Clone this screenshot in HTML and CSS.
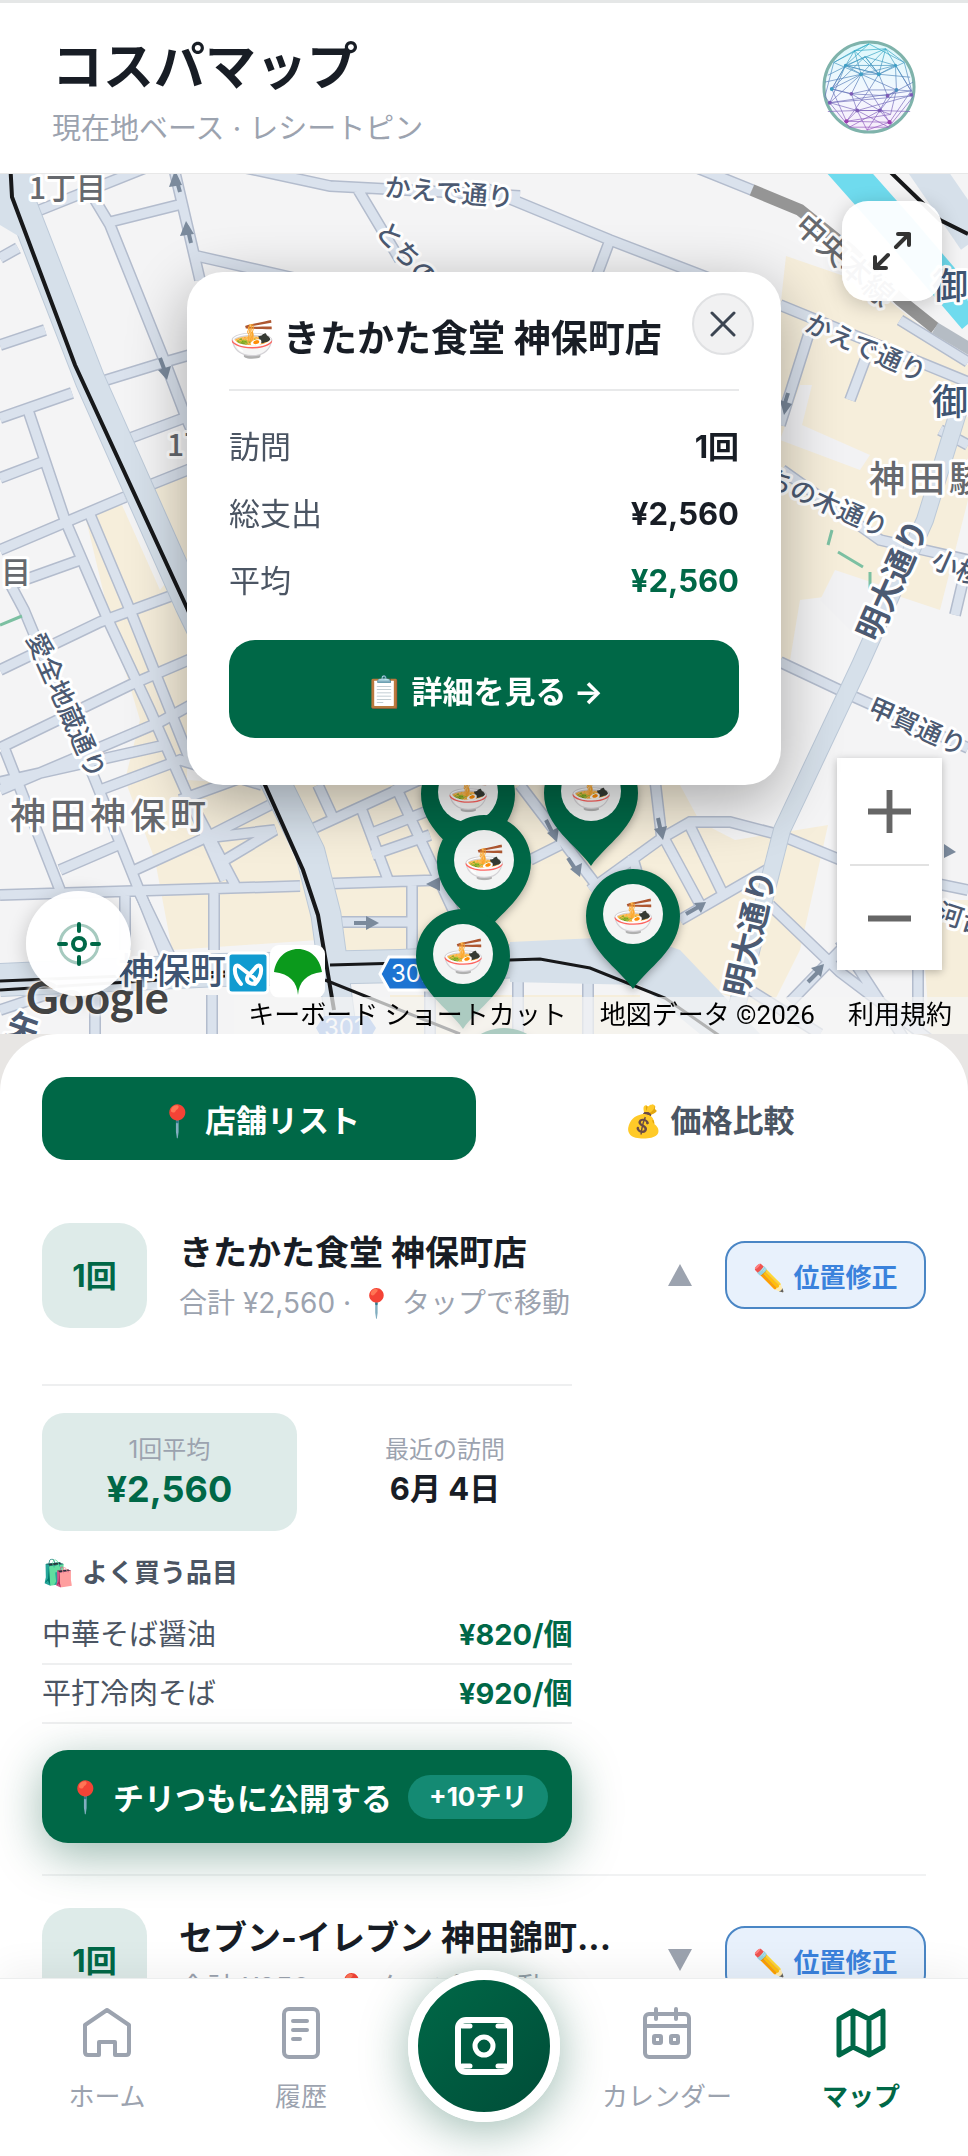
FILE: index.html
```
<!DOCTYPE html>
<html lang="ja">
<head>
  <meta charset="UTF-8">
  <meta name="viewport" content="width=device-width, initial-scale=1.0">
  <title>コスパマップ</title>
  <link rel="stylesheet" href="styles.css">
</head>
<body>
  <div class="app">
    <header class="header">
      <div>
        <h1 class="header-title">コスパマップ</h1>
        <p class="header-sub">現在地ベース · レシートピン</p>
      </div>
      <svg class="logo" viewBox="0 0 100 100" aria-hidden="true">
        <defs>
          <linearGradient id="mesh" x1="0" y1="0" x2="0" y2="100" gradientUnits="userSpaceOnUse">
            <stop offset="0" stop-color="#22b8c8"/>
            <stop offset="0.5" stop-color="#5f79b8"/>
            <stop offset="1" stop-color="#a04fc0"/>
          </linearGradient>
          <linearGradient id="orb" x1="0" y1="0" x2="0" y2="1">
            <stop offset="0" stop-color="#dcf8fb"/>
            <stop offset="0.6" stop-color="#f5f8ff"/>
            <stop offset="1" stop-color="#f6ebfa"/>
          </linearGradient>
        </defs>
        <circle cx="50" cy="50" r="46" fill="url(#orb)" stroke="#7fb3ab" stroke-width="3"/>
        <g fill="none" stroke="url(#mesh)" stroke-width="0.7">
          <path d="M50 6L35 13L67 11L26 28L77 28L42 37L60 37L46 19L12 52L32 57L69 59L78 53L93 54L10 66L92 59L38 74L61 74L72 78L27 85L71 86L48 94M50 6L26 28L12 52L27 85L38 74L32 57L42 37L26 28L60 37L69 59L61 74L32 57L12 52L42 37L78 53L77 28L60 37L46 19L77 28L93 54L71 86L61 74L38 74L48 94L61 74L78 53L72 78"/>
          <path d="M14 25L50 6L86 25L95 60L70 91L30 91L5 60ZM14 25L42 37M38 74L10 66L42 37L67 11M60 37L26 28L10 66M69 59L95 45M5 45L42 37L50 53L60 37L86 25M32 57L50 53L78 53M27 85L50 53L71 86M30 91L61 74L92 75M70 91L38 74L8 75M35 13L12 52M67 11L93 54M35 13L60 37L92 40M46 19L8 38M14 25L35 13L42 37M86 25L67 11L60 37"/>
        </g>
        <g fill="#7c5bb5">
          <circle cx="26" cy="28" r="1.6" fill="#3f9fc4"/><circle cx="77" cy="28" r="1.6" fill="#3f9fc4"/>
          <circle cx="42" cy="37" r="2" fill="#3f9fc4"/><circle cx="60" cy="37" r="2" fill="#3f9fc4"/>
          <circle cx="12" cy="52" r="2" fill="#3f9fc4"/><circle cx="32" cy="57" r="2"/><circle cx="69" cy="59" r="2"/>
          <circle cx="78" cy="53" r="2" fill="#4c8fc0"/><circle cx="93" cy="58" r="2"/><circle cx="10" cy="66" r="2"/>
          <circle cx="38" cy="74" r="2"/><circle cx="61" cy="74" r="2"/><circle cx="27" cy="85" r="2.2" fill="#9a3fb0"/><circle cx="71" cy="86" r="2.2" fill="#9a3fb0"/>
        </g>
      </svg>
    </header>

    <section class="map" aria-label="地図">
      <svg class="map-canvas" viewBox="0 174 968 860" preserveAspectRatio="xMidYMid slice">
        <defs>
          <g id="minor">
            <path d="M35 212L150 166M95 200L110 225L165 362L187 420L205 460M110 222L178 205M172 160L200 280M197 256L320 284M232 165L330 186L520 196M357 188L400 260"/>
            <path d="M100 382L165 362L200 352M0 258L18 248M0 345L45 330M0 418L72 393M28 410L65 520L108 620L150 710L225 880M0 478L42 462M0 550L125 497M125 440L200 412M145 487L200 465M88 510L130 610L190 760M10 585L80 560M8 580L24 610L95 780L165 955"/>
            <path d="M0 670L100 622L187 590M0 748L130 685L200 655M0 790L160 722L200 700M0 782L165 745M5 750L60 890M100 790L180 760L262 785M60 870L118 845M0 895L300 886M135 870L205 838L275 830L225 860M190 800L235 885M180 800L290 760M125 895L125 950M138 890L172 960M214 890L214 950M205 838L270 805"/>
            <path d="M310 830L430 775M360 805L390 885M318 785L335 822M372 833L425 812M372 855L430 835M318 884L440 880M412 884L412 950M335 922L412 922M395 785L460 925M520 785L600 890L610 900M655 780L662 840M530 860L560 845M590 890L662 838L690 822L730 822L780 835L860 868L968 890M664 838L702 908M690 826L722 892M632 855L645 900M680 920L770 868"/>
            <path d="M770 905L840 972L930 1040M790 1002L860 930M840 940L905 1040M918 960L918 1034M780 662L850 695L968 748M95 995L95 1034M212 995L212 1034M518 980L518 1034M588 980L588 1034M0 1010L60 990M430 990L430 1034M750 990L820 1034"/>
            <path d="M480 186L513 200L610 240L740 290M610 240L595 280M690 165L752 190M780 305L968 382M810 330L780 425M865 360L850 400M782 470L880 540L968 560M900 320L968 362M940 430L968 445M955 615L968 560"/>
          </g>
        </defs>
        <rect x="0" y="174" width="968" height="860" fill="#f4f4f5"/>
        <g fill="#f6eedb">
          <path d="M85 515L122 505L160 590L168 580L147 490L187 475V780L262 785L300 870L318 940L172 950L155 860L125 780L140 720L110 620Z"/>
          <path d="M275 785L480 760L680 785L700 822L735 840L828 825L800 950L770 1010L620 960L330 950Z"/>
          <path d="M786 256L870 285L968 365V500L940 610L880 590L800 600L790 660H780V310Z"/>
          <path d="M920 900L968 900V1034H930Z"/>
          <path d="M390 995L640 995L640 1034H390Z"/>
        </g>
        <g fill="#f2f2f4">
          <path d="M800 385L812 385L802 425L870 455L860 470L780 440Z"/>
          <path d="M835 570L880 585L860 640L820 600Z"/>
        </g>
        <use href="#minor" fill="none" stroke="#b3bccd" stroke-width="12"/>
        <use href="#minor" fill="none" stroke="#dae2ed" stroke-width="9"/>

        <!-- wide roads -->
        <g fill="none" stroke="#bcc9d8" stroke-linejoin="round">
          <path stroke-width="31" d="M22 160L22 205L90 380L190 605L277 785L310 852L326 915L342 1034"/>
          <path stroke-width="18" d="M965 390L925 520L860 665L782 830L730 1034"/>
          <path stroke-width="34" d="M0 980L220 970L400 966L590 958"/>
        </g>
        <g fill="none" stroke="#d6e0ea" stroke-linejoin="round">
          <path stroke-width="29" d="M22 160L22 205L90 380L190 605L277 785L310 852L326 915L342 1034"/>
          <path stroke-width="16" d="M965 390L925 520L860 665L782 830L730 1034"/>
          <path stroke-width="32" d="M0 980L220 970L400 966L590 958"/>
          <path stroke-width="34" d="M920 160L975 240"/>
        </g>
        <path d="M510 942L640 936L680 950L760 1034H700L640 985L510 982Z" fill="#d6e0ea"/>
        <path d="M-2 174H20L25 240L0 225Z" fill="#d6e0ea"/>

        <!-- river and railways -->
        <path d="M838 160L900 230L975 318" fill="none" stroke="#6fdbee" stroke-width="34"/>
        <path d="M752 190L800 210L850 250L900 300L935 328" fill="none" stroke="#959595" stroke-width="12"/>
        <path d="M935 328L975 352" fill="none" stroke="#b5bcc4" stroke-width="12"/>
        <g fill="none" stroke="#17181a" stroke-width="4">
          <path d="M10 160L12 197L75 365L187 608L265 785L303 870L318 915L334 1010"/>
          <path d="M878 160L940 220L968 234"/>
          <path d="M0 981L225 972M0 990L225 976M330 965L510 960L540 959L590 968L665 998L740 1050" stroke-width="3"/>
          <path d="M325 980L460 1034" stroke-width="3"/>
        </g>
        <g fill="none" stroke="#7cc0a2" stroke-width="3">
          <path d="M832 530L828 545M838 552L863 567M870 572V590M0 625L22 616"/>
        </g>

        <!-- one-way arrows -->
        <g fill="none" stroke="#7b8a9c" stroke-width="4">
          <path d="M180 192L176 178M191 243L187 226M160 358L166 374M354 923H372M546 820L554 836M568 858L577 872M658 818L661 832M686 914L700 906M808 982L820 970M788 393L784 406"/>
        </g>
        <g fill="#7b8a9c">
          <path d="M175 170L182 185L169 187Z"/><path d="M186 221L194 234L180 236Z"/><path d="M167 380L158 370L171 366Z"/>
          <path d="M379 923L366 930V916Z"/><path d="M557 842L547 833L559 827Z"/><path d="M580 877L570 869L582 863Z"/>
          <path d="M663 840L654 829L667 826Z"/><path d="M706 902L701 913L694 903Z"/><path d="M824 964L821 977L811 968Z"/>
          <path d="M784 415L780 400L792 404Z"/><path d="M956 852L944 858L944 844Z"/><path d="M426 884L440 877V891Z"/>
        </g>

        <g class="map-label">
          <text class="area" x="29" y="199">1丁目</text>
          <text class="area" x="167" y="456">1丁目</text>
          <text class="area" x="1" y="583">目</text>
          <text class="area large" x="10" y="829">神田神保町</text>
          <text class="area large" x="869" y="492">神田駿河台</text>
          <text class="road" transform="translate(384 196) rotate(5)">かえで通り</text>
          <text class="road" transform="translate(374 232) rotate(48)">とちの木</text>
          <text class="road" transform="translate(803 330) rotate(24)">かえで通り</text>
          <text class="road" transform="translate(764 485) rotate(24)">ちの木通り</text>
          <text class="road" transform="translate(930 566) rotate(24)">小桜通り</text>
          <text class="road" transform="translate(866 714) rotate(24)">甲賀通り</text>
          <text class="road" transform="translate(935 920) rotate(18)">河台</text>
          <text class="road" transform="translate(26 638) rotate(66)">愛全地蔵通り</text>
          <text class="road bold" transform="translate(877 643) rotate(-66)">明大通り</text>
          <text class="road bold" transform="translate(747 998) rotate(-77)">明大通り</text>
          <text class="road bold" transform="translate(4 1034) rotate(20)">矢</text>
          <text class="area" transform="translate(793 228) rotate(42)">中央本線</text>
          <text class="station" x="932" y="415">御茶</text>
          <text class="station" x="932" y="299">御茶</text>
          <text class="station" x="118" y="984">神保町</text>
        </g>

        <!-- station marks -->
        <rect x="228" y="953" width="40" height="40" rx="4" fill="#109bd0" stroke="#fff" stroke-width="3"/>
        <path d="M241 984C232 974 234 961 240 967L254 978C258 982 254 985 250 983C246 981 246 977 250 974L256 967C262 961 264 974 255 984" fill="none" stroke="#fff" stroke-width="4" stroke-linecap="round"/>
        <rect x="270" y="945" width="55" height="53" rx="9" fill="#fff"/>
        <path d="M298 995C297 982 290 974 274 972C276 958 286 949 298 949C310 949 320 958 322 972C306 974 299 982 298 995Z" fill="#0b9a1c"/>
        <path d="M380 974L389 957H440V990H389Z" fill="#1d74d2" stroke="#fff" stroke-width="3"/>
        <text class="route" x="391" y="982">302</text>
        <path d="M316 1028L324 1016H368L376 1028L368 1042H324Z" fill="#7fa9e6"/>
        <text class="route" x="324" y="1036">301</text>

        <g class="pins">
          <g id="pin" class="pin" transform="translate(468 792)">
            <path d="M0 75C-14 54 -47 36 -47 2A47 47 0 0 1 47 2C47 36 14 54 0 75Z"/>
            <circle r="30"/>
            <text y="14">🍜</text>
          </g>
          <use href="#pin" x="123" y="-1"/>
          <use href="#pin" x="36" y="281"/>
          <use href="#pin" x="16" y="68"/>
          <use href="#pin" x="-5" y="162"/>
          <use href="#pin" x="165" y="122"/>
        </g>
      </svg>

      <span class="google">Google</span>
      <div class="attribution">
        <button class="attribution-link" type="button">キーボード ショートカット</button>
        <span>地図データ ©2026</span>
        <a class="attribution-link" href="#terms">利用規約</a>
      </div>

      <button class="expand" type="button" aria-label="全画面">
        <svg viewBox="0 0 40 40" fill="none" stroke="#333" stroke-width="4" stroke-linecap="round" stroke-linejoin="round"><path d="M24 16L37 3M26 3H37V14M16 24L3 37M3 26V37H14"/></svg>
      </button>
      <button class="locate" type="button" aria-label="現在地">
        <svg viewBox="0 0 44 44" fill="none" stroke="#006847" stroke-linecap="round"><circle cx="22" cy="22" r="19" stroke-width="3" opacity="0.35"/><circle cx="22" cy="22" r="6" stroke-width="4"/><path stroke-width="4" d="M22 2V9M22 35V42M2 22H9M35 22H42"/></svg>
      </button>
      <div class="zoom">
        <button class="zoom-btn" type="button" aria-label="拡大"><svg viewBox="0 0 44 44" stroke="#666" stroke-width="6"><path d="M22 0V44M0 22H44"/></svg></button>
        <button class="zoom-btn" type="button" aria-label="縮小"><svg viewBox="0 0 44 44" stroke="#666" stroke-width="6"><path d="M0 22H44"/></svg></button>
      </div>

      <div class="popup" role="dialog" aria-labelledby="popup-title">
        <button class="popup-close" type="button" aria-label="閉じる">
          <svg viewBox="0 0 26 26" stroke="#3c4552" stroke-width="3" stroke-linecap="round"><path d="M2 2L24 24M24 2L2 24"/></svg>
        </button>
        <h2 class="popup-title" id="popup-title"><span class="emoji">🍜</span>きたかた食堂 神保町店</h2>
        <dl class="popup-stats">
          <div class="stat"><dt>訪問</dt><dd>1回</dd></div>
          <div class="stat"><dt>総支出</dt><dd>¥2,560</dd></div>
          <div class="stat"><dt>平均</dt><dd class="green">¥2,560</dd></div>
        </dl>
        <button class="popup-btn" type="button"><span class="emoji">📋</span>詳細を見る →</button>
      </div>
    </section>

    <main class="sheet">
      <div class="tabs" role="tablist">
        <button class="tab active" type="button" role="tab" aria-selected="true"><span class="emoji">📍</span>店舗リスト</button>
        <button class="tab" type="button" role="tab" aria-selected="false"><span class="emoji">💰</span>価格比較</button>
      </div>

      <article class="shop">
        <div class="shop-row">
          <div class="count">1回</div>
          <div class="shop-info">
            <h3 class="shop-name">きたかた食堂 神保町店</h3>
            <p class="shop-sub">合計 ¥2,560 · <span class="emoji">📍</span>タップで移動</p>
          </div>
          <svg class="caret" viewBox="0 0 24 22" aria-hidden="true"><path d="M12 0L24 22H0Z"/></svg>
          <button class="fix-btn" type="button"><span class="emoji">✏️</span>位置修正</button>
        </div>

        <div class="detail">
          <div class="summary">
            <div class="summary-box filled">
              <span class="summary-label">1回平均</span>
              <strong class="summary-value green">¥2,560</strong>
            </div>
            <div class="summary-box">
              <span class="summary-label">最近の訪問</span>
              <strong class="summary-value date">6月 4日</strong>
            </div>
          </div>
          <h4 class="items-title"><span class="emoji">🛍️</span>よく買う品目</h4>
          <ul class="items">
            <li class="item"><span>中華そば醤油</span><strong class="green">¥820/個</strong></li>
            <li class="item"><span>平打冷肉そば</span><strong class="green">¥920/個</strong></li>
          </ul>
          <button class="publish" type="button">
            <span class="emoji">📍</span>チリつもに公開する
            <span class="bonus">+10チリ</span>
          </button>
        </div>
      </article>

      <article class="shop">
        <div class="shop-row">
          <div class="count">1回</div>
          <div class="shop-info">
            <h3 class="shop-name">セブン-イレブン 神田錦町...</h3>
            <p class="shop-sub">合計 ¥850 · <span class="emoji">📍</span>タップで移動</p>
          </div>
          <svg class="caret" viewBox="0 0 24 22" aria-hidden="true"><path d="M0 0H24L12 22Z"/></svg>
          <button class="fix-btn" type="button"><span class="emoji">✏️</span>位置修正</button>
        </div>
      </article>
    </main>

    <nav class="nav">
      <a class="nav-item" href="#home">
        <svg viewBox="0 0 56 56"><path d="M6 20L28 5L50 20V47Q50 50 47 50H36V37H20V50H9Q6 50 6 47Z"/></svg>
        ホーム
      </a>
      <a class="nav-item" href="#history">
        <svg viewBox="0 0 56 56"><rect x="11" y="4" width="34" height="48" rx="5"/><path d="M20 16H34M20 25H34M20 34H27"/></svg>
        履歴
      </a>
      <button class="scan" type="button" aria-label="レシートを撮影">
        <svg viewBox="0 0 60 60" fill="none" stroke="#fff" stroke-linecap="round"><rect x="4" y="4" width="52" height="52" rx="8" stroke-width="6"/><circle cx="30" cy="30" r="9" stroke-width="5"/><path stroke-width="5" d="M8 10H16M44 10H52M8 50H16M44 50H52"/></svg>
      </button>
      <a class="nav-item" href="#calendar">
        <svg viewBox="0 0 56 56"><rect x="6" y="9" width="44" height="43" rx="4"/><path d="M6 21H50M17 4V14M37 4V14"/><rect x="15" y="31" width="7" height="7" rx="1"/><rect x="32" y="31" width="7" height="7" rx="1"/></svg>
        カレンダー
      </a>
      <a class="nav-item active" href="#map" aria-current="page">
        <svg viewBox="0 0 56 56"><path d="M6 14L20 6L36 14L50 6V42L36 50L20 42L6 50ZM20 6V42M36 14V50"/></svg>
        マップ
      </a>
    </nav>
  </div>
</body>
</html>
```
FILE: styles.css
```
* {
  margin: 0;
  padding: 0;
  box-sizing: border-box;
}

body {
  font-family: Inter, "Noto Sans CJK JP", sans-serif;
  background: #e8e6e4;
  color: #181d25;
}

button {
  font: inherit;
  color: inherit;
  border: none;
  background: none;
  cursor: pointer;
}

a {
  color: inherit;
  text-decoration: none;
}

.green {
  color: #006847;
}

.emoji {
  margin-right: 8px;
}

.app {
  display: flex;
  flex-direction: column;
  height: 100vh;
  overflow: hidden;
}

/* Header */
.header {
  display: flex;
  justify-content: space-between;
  align-items: center;
  padding: 25px 50px 22px 52px;
  background: #fff;
  border-top: 3px solid #e5e7e7;
  border-bottom: 1px solid #e8e8e8;
}

.header-title {
  font-size: 51px;
  font-weight: 700;
  line-height: 78px;
}

.header-sub {
  font-size: 29px;
  line-height: 45px;
  color: #9ca3af;
}

.logo {
  width: 98px;
  height: 98px;
  margin-bottom: 6px;
}

/* Map */
.map {
  position: relative;
  flex-shrink: 0;
  height: 860px;
  overflow: hidden;
}

.map-canvas {
  display: block;
  width: 100%;
  height: 100%;
}

.map-label {
  font-family: "Noto Sans CJK JP", sans-serif;
  font-weight: 500;
  paint-order: stroke;
  stroke: #fff;
  stroke-width: 6px;
  stroke-linejoin: round;
}

.area {
  font-size: 30px;
  fill: #66696e;
}

.area.large {
  font-size: 36px;
  letter-spacing: 4px;
}

.road {
  font-size: 26px;
  fill: #4c5a72;
}

.road.bold {
  font-size: 32px;
  font-weight: 700;
}

.station {
  font-size: 36px;
  fill: #3f5573;
}

.route {
  font-size: 24px;
  fill: #fff;
}

.pins {
  filter: drop-shadow(0 3px 4px rgba(0, 0, 0, 0.3));
}

.pin {
  fill: #006847;
}

.pin circle {
  fill: #f3f4f4;
}

.pin text {
  font-size: 34px;
  text-anchor: middle;
}

.google {
  position: absolute;
  left: 26px;
  bottom: 13px;
  font-family: Lato, sans-serif;
  font-size: 45px;
  line-height: 48px;
  font-weight: 700;
  color: #444;
  text-shadow: 0 0 4px #fff, 0 0 4px #fff;
}

.attribution {
  position: absolute;
  right: 0;
  bottom: 0;
  display: flex;
  gap: 33px;
  padding: 0 16px 0 14px;
  background: rgba(245, 245, 245, 0.7);
  font-family: Roboto, "Noto Sans CJK JP", sans-serif;
  font-size: 26px;
  line-height: 37px;
  color: #000;
}

.expand {
  position: absolute;
  top: 27px;
  right: 26px;
  width: 100px;
  height: 100px;
  border-radius: 26px;
  background: rgba(255, 255, 255, 0.95);
  box-shadow: 0 4px 20px rgba(0, 0, 0, 0.2);
}

.expand svg {
  width: 40px;
  height: 40px;
}

.locate {
  position: absolute;
  left: 26px;
  bottom: 38px;
  width: 105px;
  height: 105px;
  border-radius: 50%;
  background: rgba(255, 255, 255, 0.97);
  box-shadow: 0 4px 20px rgba(0, 0, 0, 0.2);
}

.locate svg {
  width: 44px;
  height: 44px;
}

.expand svg,
.locate svg,
.zoom svg,
.popup-close svg,
.scan svg {
  display: block;
  margin: 0 auto;
}

.zoom {
  position: absolute;
  right: 26px;
  bottom: 64px;
  width: 105px;
  padding: 0 13px;
  background: #fff;
  box-shadow: 0 2px 8px rgba(0, 0, 0, 0.25);
}

.zoom-btn {
  display: block;
  width: 100%;
  height: 106px;
}

.zoom-btn + .zoom-btn {
  border-top: 2px solid #e2e2e2;
}

.zoom svg {
  width: 43px;
  height: 43px;
}

/* Popup card */
.popup {
  position: absolute;
  top: 98px;
  left: 50%;
  transform: translateX(-50%);
  width: 594px;
  padding: 42px 42px 47px;
  border-radius: 36px;
  background: #fff;
  box-shadow: 0 16px 60px rgba(0, 0, 0, 0.32);
}

.popup-close {
  position: absolute;
  top: 21px;
  right: 27px;
  width: 62px;
  height: 62px;
  border: 2px solid #e0e1e3;
  border-radius: 50%;
  background: #f1f1f2;
}

.popup-close svg {
  width: 26px;
  height: 26px;
}

.popup-title {
  padding-bottom: 25px;
  border-bottom: 2px solid #e8e9ea;
  font-size: 37px;
  font-weight: 700;
  line-height: 50px;
  white-space: nowrap;
}

.popup-stats {
  padding: 22px 0 26px;
}

.stat {
  display: flex;
  justify-content: space-between;
  font-size: 31px;
  line-height: 67px;
}

.stat dt {
  color: #4b5563;
}

.stat dd {
  font-weight: 700;
}

.popup-btn {
  width: 100%;
  height: 98px;
  border-radius: 26px;
  background: #006847;
  color: #fff;
  font-size: 31px;
  font-weight: 700;
}

/* Bottom sheet */
.sheet {
  flex: 1;
  min-height: 0;
  overflow: hidden;
  padding: 43px 42px 0;
  border-radius: 58px 58px 0 0;
  background: #fff;
}

.tabs {
  display: grid;
  grid-template-columns: 1fr 1fr;
  gap: 16px;
  margin-bottom: 31px;
}

.tab {
  height: 83px;
  border-radius: 24px;
  color: #4b5563;
  font-size: 31px;
  font-weight: 700;
}

.tab.active {
  background: #006847;
  color: #fff;
}

.shop {
  padding: 31px 0;
  border-bottom: 2px solid #f1f2f3;
}

.shop-row {
  display: flex;
  align-items: center;
}

.count {
  width: 105px;
  margin-right: 32px;
  border-radius: 28px;
  background: #deebe9;
  color: #006847;
  font-size: 31px;
  font-weight: 700;
  line-height: 105px;
  text-align: center;
}

.shop-info {
  flex: 1;
  padding-top: 6px;
}

.shop-name {
  font-size: 34px;
  font-weight: 700;
  line-height: 50px;
}

.shop-sub {
  font-size: 28px;
  line-height: 50px;
  color: #9ca3af;
}

.caret {
  width: 24px;
  height: 22px;
  margin-right: 33px;
  fill: #9ca3af;
}

.fix-btn {
  width: 201px;
  height: 68px;
  border: 2px solid #4a86c5;
  border-radius: 20px;
  background: #e8f1fc;
  color: #3a82dc;
  font-size: 26px;
  font-weight: 700;
}

.detail {
  width: 60%;
  margin-top: 56px;
  border-top: 2px solid #eeeff0;
  padding-top: 27px;
}

.summary {
  display: grid;
  grid-template-columns: 1fr 1fr;
  gap: 21px;
}

.summary-box {
  display: flex;
  flex-direction: column;
  align-items: center;
  height: 118px;
  padding-top: 19px;
  border-radius: 22px;
}

.summary-box.filled {
  background: #deebe9;
}

.summary-label {
  font-size: 24px;
  line-height: 36px;
  color: #9ca3af;
}

.summary-value {
  font-size: 36px;
  line-height: 42px;
}

.summary-value.date {
  font-size: 31px;
}

.items-title {
  margin: 24px 0 15px;
  color: #4b5563;
  font-size: 26px;
  font-weight: 700;
  line-height: 36px;
}

.items {
  list-style: none;
  margin-bottom: 26px;
}

.item {
  display: flex;
  justify-content: space-between;
  border-bottom: 2px solid #eeeff0;
  color: #4b5563;
  font-size: 29px;
  line-height: 57px;
}

.publish {
  display: flex;
  align-items: center;
  justify-content: center;
  width: 100%;
  height: 93px;
  border-radius: 26px;
  background: #006847;
  box-shadow: 0 12px 48px rgba(0, 80, 55, 0.4);
  color: #fff;
  font-size: 31px;
  font-weight: 700;
  white-space: nowrap;
}

.bonus {
  margin-left: 16px;
  padding: 0 21px;
  border-radius: 22px;
  background: #148a73;
  font-size: 26px;
  line-height: 44px;
}

/* Bottom navigation */
.nav {
  position: relative;
  display: grid;
  grid-template-columns: 1fr 1fr 172px 1fr 1fr;
  flex-shrink: 0;
  padding: 26px 10px 40px;
  border-top: 1px solid #eceeee;
  background: #fff;
  box-shadow: 0 -8px 36px rgba(0, 0, 0, 0.06);
}

.nav-item {
  display: flex;
  flex-direction: column;
  align-items: center;
  gap: 16px;
  color: #9ca3af;
  font-size: 26px;
  line-height: 39px;
}

.nav-item svg {
  width: 56px;
  height: 56px;
  fill: none;
  stroke: currentColor;
  stroke-width: 4;
  stroke-linecap: round;
  stroke-linejoin: round;
}

.nav-item.active {
  color: #006847;
  font-weight: 700;
}

.nav-item.active svg {
  stroke-width: 5;
}

.scan {
  width: 152px;
  height: 152px;
  margin: -35px auto -60px;
  border: 10px solid #fff;
  border-radius: 50%;
  background: linear-gradient(135deg, #006847, #004d38);
  box-shadow: 0 8px 48px rgba(0, 80, 55, 0.4);
}

.scan svg {
  width: 60px;
  height: 60px;
}
```
